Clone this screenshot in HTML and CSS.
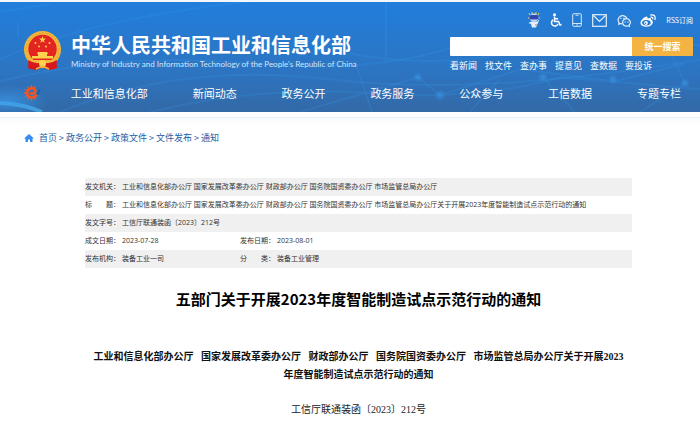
FILE: index.html
```html
<!DOCTYPE html>
<html lang="zh-CN">

<head>
    <meta charset="UTF-8">
    <meta name="viewport" content="width=device-width, initial-scale=1.0">
    <title>五部门关于开展2023年度智能制造试点示范行动的通知</title>
    <link rel="stylesheet" href="styles.css">
</head>

<body>
    <header class="header">
        <!-- Network lines behind the banner -->
        <svg class="header-bg" viewBox="0 0 700 111" preserveAspectRatio="none" aria-hidden="true">
            <defs>
                <radialGradient id="glow">
                    <stop offset="0" stop-color="#3aa0f5" stop-opacity=".6" />
                    <stop offset="1" stop-color="#3aa0f5" stop-opacity="0" />
                </radialGradient>
            </defs>
            <g fill="none" stroke="#3aa0f5" stroke-opacity=".18" stroke-width="2">
                <path d="M0 58Q60 30 150 14T260 0M0 80Q120 50 250 62T470 40M60 111Q180 60 330 78T700 58" />
                <path d="M150 111Q260 84 370 92T560 76L700 88M300 111L418 76L440 94L520 68L615 80L685 62" />
                <path d="M350 52Q430 68 520 50T700 44M355 60L372 111M668 46L685 82L640 111M386 0V60" />
                <path d="M18 20V36M0 10L50 2M545 78L575 111M470 111L500 78" />
            </g>
            <path d="M0 102Q24 103 42 111" fill="none" stroke="#4cc0fa" stroke-opacity=".6" stroke-width="4" />
            <ellipse cx="8" cy="100" rx="40" ry="16" fill="url(#glow)" />
            <circle cx="418" cy="76" r="5" fill="url(#glow)" />
            <circle cx="440" cy="94" r="6" fill="url(#glow)" />
            <circle cx="543" cy="76" r="5" fill="url(#glow)" />
            <circle cx="613" cy="78" r="5" fill="url(#glow)" />
            <circle cx="685" cy="82" r="5" fill="url(#glow)" />
        </svg>

        <div class="header-top">
            <a class="brand" href="#">
                <!-- National emblem -->
                <svg class="emblem" viewBox="0 0 37 40" aria-hidden="true">
                    <path d="M5 29L4 37Q10 40 15 38L18 36L22 38Q28 40 33 37L32 29Z" fill="#d8171c" />
                    <circle cx="18.500" cy="18.500" r="18.500" fill="#f3b83b" />
                    <circle cx="18.500" cy="18.500" r="16.500" fill="none" stroke="#d8922a" stroke-width=".8" stroke-dasharray="2 1.500" />
                    <circle cx="18.500" cy="18" r="14.200" fill="#e32420" />
                    <path d="M18.500 5L19.400 7.600H22L19.900 9.200L20.700 11.800L18.500 10.200L16.300 11.800L17.100 9.200L15 7.600H17.600Z" fill="#ffd34d" />
                    <g fill="#ffd34d">
                        <circle cx="11.500" cy="12" r="1" />
                        <circle cx="25.500" cy="12" r="1" />
                        <circle cx="15" cy="15.500" r="1" />
                        <circle cx="22" cy="15.500" r="1" />
                        <path d="M14 21H23L24 23H13ZM14 23H23V25H29V27.500H8V25H14Z" />
                    </g>
                    <path d="M7 29H30L25 35H12Z" fill="#f3b83b" />
                    <path d="M4 29Q12 34 18.500 31Q25 34 33 29L32 36Q24 39 18.500 35Q13 39 5 36Z" fill="#d8171c" />
                    <circle cx="18.500" cy="32.500" r="3.500" fill="#ffd34d" />
                    <path d="M12 38L18.500 35L25 38" fill="none" stroke="#f3b83b" stroke-width="1.500" />
                </svg>
                <span class="brand-text">
                    <span class="brand-name">中华人民共和国工业和信息化部</span>
                    <span class="brand-en">Ministry of Industry and Information Technology of the People's Republic of China</span>
                </span>
            </a>

            <div class="tools">
                <div class="tool-icons">
                    <a href="#" aria-label="智能助手">
                        <svg width="12" height="16" viewBox="0 0 12 16">
                            <path d="M2 3L1 1M4 2V0M8 2V0M10 3L11 1M1 6H0M11 6H12" stroke="#e8d548" stroke-width="1" />
                            <ellipse cx="6" cy="5.500" rx="4.500" ry="4" fill="#c9d8f4" />
                            <rect x="1.500" y="3" width="9" height="4.500" rx="2" fill="#3345ae" />
                            <path d="M3 9.500H9L11.500 7.500L9.500 12L8 15.500H4L3 12L.5 11Z" fill="#e6effb" />
                            <path d="M7 12L9 12L8 15Z" fill="#b7a898" />
                        </svg>
                    </a>
                    <a href="#" aria-label="无障碍">
                        <svg width="12" height="14" viewBox="0 0 12 14" fill="none" stroke="#fff" stroke-width="1.500">
                            <circle cx="4.500" cy="1.700" r="1.500" fill="#fff" stroke="none" />
                            <path d="M4.500 3.500V8.500H8.500L10 12L11.500 11.500M4.500 5.700H8" />
                            <path d="M3 6.800A3.400 3.400 0 1 0 8 11" />
                        </svg>
                    </a>
                    <a href="#" aria-label="手机版">
                        <svg width="10" height="14" viewBox="0 0 10 14" fill="none" stroke="#d5e8fb">
                            <rect x=".7" y=".7" width="8.600" height="12.600" rx="1" />
                            <path d="M1 10.500H9M3.500 2.200H6.500M4.300 12H5.700" />
                        </svg>
                    </a>
                    <a href="#" aria-label="邮箱">
                        <svg width="15" height="13" viewBox="0 0 15 13" fill="none" stroke="#e4f0fc" stroke-width="1.200">
                            <rect x=".7" y=".7" width="13.600" height="11.600" />
                            <path d="M1.500 1.500L7.500 7.500L13.500 1.500" />
                        </svg>
                    </a>
                    <a href="#" aria-label="微信">
                        <svg width="14" height="13" viewBox="0 0 14 13" fill="none" stroke="#e4f0fc" stroke-width="1.200">
                            <path d="M5 9.800Q4.200 9.800 3.500 9.500L1.800 10.300L2 8.500A4.600 4.300 0 1 1 9.800 4" />
                            <path d="M12.200 11L12.300 12.400L10.900 11.800A3.900 3.700 0 1 1 12.200 11Z" />
                            <path d="M3.300 4.300H4.500M6.300 4.300H7.500M7.500 8H8.700M10.300 8H11.500" />
                        </svg>
                    </a>
                    <a href="#" aria-label="微博">
                        <svg width="16" height="13" viewBox="0 0 16 13">
                            <path d="M6.500 2.500Q8 2.500 7.500 4.500Q11.500 3 11.200 5.700Q13.500 6.500 12.800 8.700Q11.500 12.500 6.500 12.700Q.8 12.600 .5 9.200Q.5 6.500 3.500 4Q5.200 2.600 6.500 2.500Z" fill="#fff" />
                            <ellipse cx="6.400" cy="8.800" rx="4.300" ry="2.700" fill="#2278cd" />
                            <circle cx="6" cy="9" r="1.900" fill="#fff" />
                            <circle cx="5.700" cy="9.200" r=".7" fill="#2278cd" />
                            <path d="M10 1Q14.500 0 15.200 3.500Q15.300 5 14.700 6M10.500 3.200Q13 2.800 12.900 5.300" fill="none" stroke="#fff" stroke-width="1.200" />
                        </svg>
                    </a>
                    <a class="rss" href="#">RSS订阅</a>
                </div>
                <form class="search">
                    <input class="search-input" type="text" aria-label="搜索">
                    <button class="search-btn" type="button">统一搜索</button>
                </form>
                <div class="quick-links">
                    <a href="#">看新闻</a>
                    <a href="#">找文件</a>
                    <a href="#">查办事</a>
                    <a href="#">提意见</a>
                    <a href="#">查数据</a>
                    <a href="#">要投诉</a>
                </div>
            </div>
        </div>

        <nav class="nav">
            <a class="nav-logo" href="#" aria-label="首页">
                <svg width="17" height="16" viewBox="0 0 17 16" fill="none">
                    <path d="M7.500 0V3M3.500 1.500L5 4M.8 4.300L3.300 5.800M0 8H3M.8 11.700L3.300 10.200M3.500 14.500L5 12M7.500 16V13M11.300 14.500L10 12M11 1.200L10 4" stroke="#e2603a" stroke-width="1.300" />
                    <path d="M6 8.500Q11.500 9 11.500 6Q11 3 7.500 3.200Q3.300 3.800 3.300 8Q3.500 12.600 8 12.600Q11 12.400 13 9.500" stroke="#f9531c" stroke-width="2.400" />
                    <path d="M13 9.500Q15 8 15.800 4.500" stroke="#1263b5" stroke-width="1.800" />
                </svg>
            </a>
            <a href="#">工业和信息化部</a>
            <a href="#">新闻动态</a>
            <a href="#">政务公开</a>
            <a href="#">政务服务</a>
            <a href="#">公众参与</a>
            <a href="#">工信数据</a>
            <a href="#">专题专栏</a>
        </nav>
    </header>

    <main class="main">
        <div class="breadcrumb">
            <svg class="home" width="10" height="8" viewBox="0 0 10 8" aria-hidden="true">
                <path d="M5 0L10 4.500H8.500V8H6V5.500H4V8H1.500V4.500H0Z" fill="#378af0" />
            </svg>
            <a href="#">首页</a><span>&gt;</span>
            <a href="#">政务公开</a><span>&gt;</span>
            <a href="#">政策文件</a><span>&gt;</span>
            <a href="#">文件发布</a><span>&gt;</span>
            <a href="#">通知</a>
        </div>

        <article class="article">
            <table class="info">
                <colgroup>
                    <col class="col-label">
                    <col class="col-value">
                    <col class="col-label">
                    <col>
                </colgroup>
                <tr>
                    <th scope="row">发文机关：</th>
                    <td colspan="3">工业和信息化部办公厅 国家发展改革委办公厅 财政部办公厅 国务院国资委办公厅 市场监管总局办公厅</td>
                </tr>
                <tr>
                    <th scope="row">标　　题：</th>
                    <td colspan="3">工业和信息化部办公厅 国家发展改革委办公厅 财政部办公厅 国务院国资委办公厅 市场监管总局办公厅关于开展2023年度智能制造试点示范行动的通知</td>
                </tr>
                <tr>
                    <th scope="row">发文字号：</th>
                    <td colspan="3">工信厅联通装函〔2023〕212号</td>
                </tr>
                <tr>
                    <th scope="row">成文日期：</th>
                    <td>2023-07-28</td>
                    <th scope="row">发布日期：</th>
                    <td>2023-08-01</td>
                </tr>
                <tr>
                    <th scope="row">发布机构：</th>
                    <td>装备工业一司</td>
                    <th scope="row">分　　类：</th>
                    <td>装备工业管理</td>
                </tr>
            </table>

            <h1 class="title">五部门关于开展2023年度智能制造试点示范行动的通知</h1>
            <h2 class="subtitle">工业和信息化部办公厅&ensp; 国家发展改革委办公厅&ensp; 财政部办公厅&ensp; 国务院国资委办公厅&ensp; 市场监管总局办公厅关于开展2023<br>年度智能制造试点示范行动的通知</h2>
            <p class="doc-no">工信厅联通装函〔2023〕212号</p>
        </article>
    </main>
</body>

</html>
```

FILE: styles.css
```css
* {
    box-sizing: border-box;
}

body {
    margin: 0;
    border-top: 2px solid #f4f7fa;
    background-color: #ffffff;
    font-family: "Noto Sans CJK SC", sans-serif;
    color: #333;
}

a {
    color: inherit;
    text-decoration: none;
}

svg {
    display: block;
}

/* Header Styling */
.header {
    position: relative;
    padding: 10px 7px 10px 24px;
    background: linear-gradient(#217edb, #2c75c3 60%, #3369a6);
    color: #ffffff;
}

.header-bg {
    position: absolute;
    inset: 0;
    width: 100%;
    height: 100%;
}

.header-top {
    position: relative;
    display: flex;
    justify-content: space-between;
    align-items: flex-start;
}

/* Brand Styling */
.brand {
    display: flex;
    align-items: center;
    gap: 10px;
    padding-top: 19px;
}

.emblem {
    width: 37px;
    height: 40px;
}

.brand-text {
    display: flex;
    flex-direction: column;
    white-space: nowrap;
}

.brand-name {
    font-size: 20px;
    font-weight: 700;
    line-height: 26px;
}

.brand-en {
    font-family: Lato, sans-serif;
    font-size: 8px;
    line-height: 12px;
    color: #d3e5f8;
}

/* Tools Styling */
.tools {
    width: 243px;
}

.tool-icons {
    display: flex;
    justify-content: space-between;
    align-items: center;
    height: 16px;
    padding-left: 78px;
}

.rss {
    font-size: 7px;
    line-height: 16px;
}

.search {
    display: flex;
    height: 19px;
    margin: 9px 0 3px;
}

.search-input {
    flex: 1;
    min-width: 0;
    padding: 0 5px;
    border: none;
    border-radius: 1px 0 0 1px;
    background-color: #ffffff;
}

.search-btn {
    width: 61px;
    padding: 0;
    border: none;
    border-radius: 0 1px 1px 0;
    background-color: #f3b443;
    color: #ffffff;
    font-family: inherit;
    font-size: 9px;
    font-weight: 700;
    cursor: pointer;
}

.quick-links {
    display: flex;
    gap: 8px;
    font-size: 9px;
    line-height: 13px;
}

/* Nav Styling */
.nav {
    position: relative;
    display: flex;
    justify-content: space-between;
    align-items: center;
    margin-top: 12px;
    padding-right: 12px;
    font-size: 11px;
    line-height: 18px;
}

.nav-logo {
    margin-right: -15px;
}

/* Main Styling */
.main {
    margin-top: 5px;
    padding: 11px 24px;
    border-top: 1px solid #eaf0f6;
    background: linear-gradient(#f8fafc, #ffffff 8px);
}

.breadcrumb {
    display: flex;
    align-items: center;
    gap: 2px;
    font-size: 9px;
    line-height: 18px;
    color: #2460a5;
}

.home {
    margin-right: 3px;
}

.article {
    margin: 31px 44px 0 61px;
    text-align: center;
}

/* Info Table Styling */
.info {
    width: 100%;
    border-collapse: collapse;
    table-layout: fixed;
    font-family: "Open Sans", "Noto Sans CJK SC", sans-serif;
    font-size: 7px;
    line-height: 18px;
    text-align: left;
}

.info th,
.info td {
    padding: 0;
    font-weight: 400;
    white-space: nowrap;
}

.info tr:nth-child(odd) {
    background-color: #f0f0f0;
}

.col-label {
    width: 37px;
}

.col-value {
    width: 118px;
}

/* Text Styling */
.title {
    margin: 19px 0 0;
    font-size: 15px;
    line-height: 24px;
    color: #000;
}

.subtitle {
    margin: 37px 0 0;
    font-family: "Liberation Serif", "Noto Sans CJK SC", serif;
    font-size: 10px;
    line-height: 18px;
    white-space: nowrap;
    color: #111;
}

.doc-no {
    margin: 17px 0 0;
    font-family: "Liberation Serif", "Noto Sans CJK SC", serif;
    font-size: 10px;
    line-height: 18px;
    color: #222;
}
```
